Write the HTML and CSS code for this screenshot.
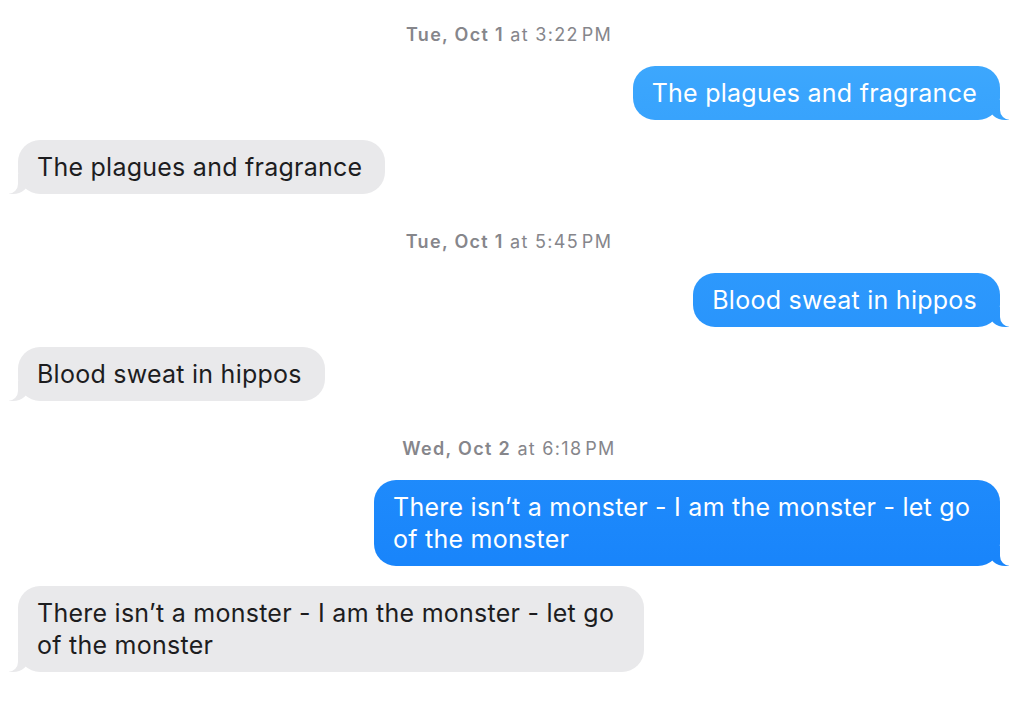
FILE: index.html
```html
<!DOCTYPE html>
<html lang="en">
<head>
<meta charset="utf-8">
<title>Messages</title>
<link rel="stylesheet" href="styles.css">
</head>
<body>
<div class="chat">
  <div class="stamp"><b>Tue, Oct 1</b> at 3:22&#8202;PM</div>
  <div class="msg sent">The plagues and fragrance</div>
  <div class="msg recv">The plagues and fragrance</div>

  <div class="stamp"><b>Tue, Oct 1</b> at 5:45&#8202;PM</div>
  <div class="msg sent">Blood sweat in hippos</div>
  <div class="msg recv">Blood sweat in hippos</div>

  <div class="stamp"><b>Wed, Oct 2</b> at 6:18&#8202;PM</div>
  <div class="msg sent">There isn’t a monster - I am the monster - let go of the monster</div>
  <div class="msg recv">There isn’t a monster - I am the monster - let go of the monster</div>
</div>
</body>
</html>
```
FILE: styles.css
```css
html, body {
  margin: 0;
  background: #ffffff;
}

body {
  font-family: Inter, "Noto Sans", "Liberation Sans", sans-serif;
  -webkit-font-smoothing: antialiased;
}

.chat {
  display: flex;
  flex-direction: column;
  padding: 25px 16px 30px 18px;
}

.stamp {
  align-self: center;
  font-size: 18px;
  line-height: 20px;
  color: #86868b;
  margin: 38px 0 21px;
  letter-spacing: 1.3px;
}

.stamp:first-child {
  margin-top: 0;
}

.stamp b {
  font-weight: 600;
}

.msg {
  position: relative;
  max-width: 584px;
  padding: 11px 23px 11px 19px;
  font-size: 25px;
  line-height: 32px;
  border-radius: 22px;
  letter-spacing: 0.25px;
}

.msg::before,
.msg::after {
  content: "";
  position: absolute;
  bottom: 0;
  height: 20px;
}

.sent {
  align-self: flex-end;
  color: #ffffff;
  background: linear-gradient(180deg, #45adfd 0px, #3aa5fd 90px, #1985fb 560px, #1784fb 702px) fixed;
  margin-bottom: 20px;
}

.sent::before {
  right: -9px;
  width: 20px;
  background: inherit;
  border-bottom-left-radius: 16px 14px;
}

.sent::after {
  right: -30px;
  width: 30px;
  background: #ffffff;
  border-bottom-left-radius: 10px;
}

.recv {
  align-self: flex-start;
  color: #1d1d1f;
  background: #e9e9eb;
}

.recv::before {
  left: -9px;
  width: 20px;
  background: #e9e9eb;
  border-bottom-right-radius: 16px 14px;
}

.recv::after {
  left: -30px;
  width: 30px;
  background: #ffffff;
  border-bottom-right-radius: 10px;
}
```
